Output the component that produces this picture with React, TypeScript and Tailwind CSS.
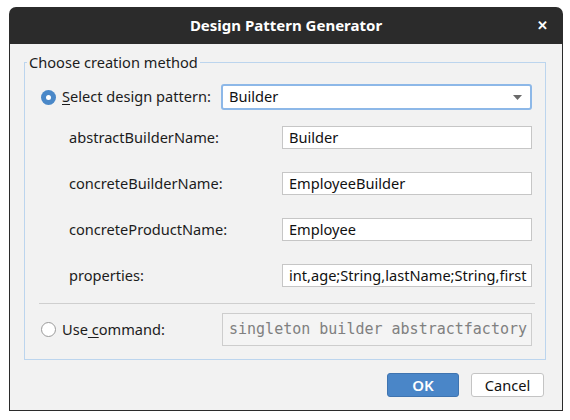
import React from "react";

const font = { fontFamily: '"Noto Sans", "Open Sans", sans-serif' };

function Radio({ checked }: { checked?: boolean }) {
  if (checked) {
    return (
      <span className="w-[15px] h-[15px] rounded-full bg-[#4a88c8] flex items-center justify-center shrink-0">
        <span className="w-[5px] h-[5px] rounded-full bg-white" />
      </span>
    );
  }
  return <span className="w-[15px] h-[15px] rounded-full bg-white border border-[#9a9a9a] shrink-0" />;
}

function FieldRow({ label, value }: { label: string; value: string }) {
  return (
    <div className="flex items-center h-[23px]">
      <span className="pl-[44px] w-[257px] text-[14.6px] text-[#1c1c1c]">{label}</span>
      <div className="w-[250px] h-[23px] bg-white border border-[#c6c6c6] px-[6px] flex items-center text-[14.6px] text-[#111] whitespace-nowrap">
        {value}
      </div>
    </div>
  );
}

export default function App() {
  return (
    <div className="w-[570px] h-[420px] bg-white pt-[7px] pl-[9px]" style={font}>
      <div className="w-[554px] h-[404px] flex flex-col">
        <div className="h-[37px] bg-[#2b2b2b] rounded-t-[7px] relative flex items-center justify-center">
          <span className="text-white font-bold text-[15px]">Design Pattern Generator</span>
          <span className="absolute right-[15px] top-[9px] text-white font-bold text-[13px] leading-[18px]">✕</span>
        </div>
        <div className="flex-1 bg-[#f2f2f2] border-x border-b border-[#2b2b2b] pl-[14px] pr-[16px]">
          <fieldset className="mt-[8px] border border-[#bcd5ee] p-0 m-0">
            <legend className="ml-[2px] px-[2px] text-[14.6px] leading-[20px] text-[#1c1c1c]">Choose creation method</legend>
            <div className="pr-[12px]">
              <div className="flex items-center h-[26px] mt-[12px] pl-[16px]">
                <Radio checked />
                <span className="ml-[6px] w-[159px] text-[14.6px] text-[#1c1c1c]">
                  <span className="underline underline-offset-2">S</span>elect design pattern:
                </span>
                <div className="w-[311px] h-[26px] bg-white border-2 border-[#8db8e8] rounded-[3px] flex items-center justify-between pl-[6px] pr-[8px] text-[14.6px] text-[#111]">
                  <span>Builder</span>
                  <svg width="9" height="5" viewBox="0 0 9 5">
                    <path d="M0 0 L9 0 L4.5 5 Z" fill="#6a6a6a" />
                  </svg>
                </div>
              </div>
              <div className="flex flex-col gap-[23px] mt-[16px]">
                <FieldRow label="abstractBuilderName:" value="Builder" />
                <FieldRow label="concreteBuilderName:" value="EmployeeBuilder" />
                <FieldRow label="concreteProductName:" value="Employee" />
                <FieldRow label="properties:" value="int,age;String,lastName;String,first" />
              </div>
              <div className="mt-[16px] ml-[14px] mr-[-2px] h-px bg-[#cfcfcf]" />
              <div className="flex items-center h-[33px] mt-[9px] mb-[13px] pl-[16px]">
                <Radio />
                <span className="ml-[6px] w-[160px] text-[14.6px] text-[#1c1c1c]">
                  Use<span className="underline underline-offset-2"> c</span>ommand:
                </span>
                <div
                  className="w-[310px] h-[33px] border border-[#cdcdcd] bg-[#f4f4f4] flex items-center px-[6px] text-[15px] text-[#808080] whitespace-nowrap overflow-hidden"
                  style={{ fontFamily: '"DejaVu Sans Mono", monospace' }}
                >
                  singleton builder abstractfactory
                </div>
              </div>
            </div>
          </fieldset>
          <div className="flex justify-end gap-[12px] mt-[13px] pr-[2px]">
            <button className="w-[72px] h-[24px] rounded-[3px] bg-[#4a86c8] border border-[#3f74b0] text-white text-[15px] font-semibold leading-none">
              OK
            </button>
            <button className="w-[73px] h-[24px] rounded-[3px] bg-white border border-[#c4c4c4] text-[#111] text-[14.6px] leading-none">
              Cancel
            </button>
          </div>
        </div>
      </div>
    </div>
  );
}
